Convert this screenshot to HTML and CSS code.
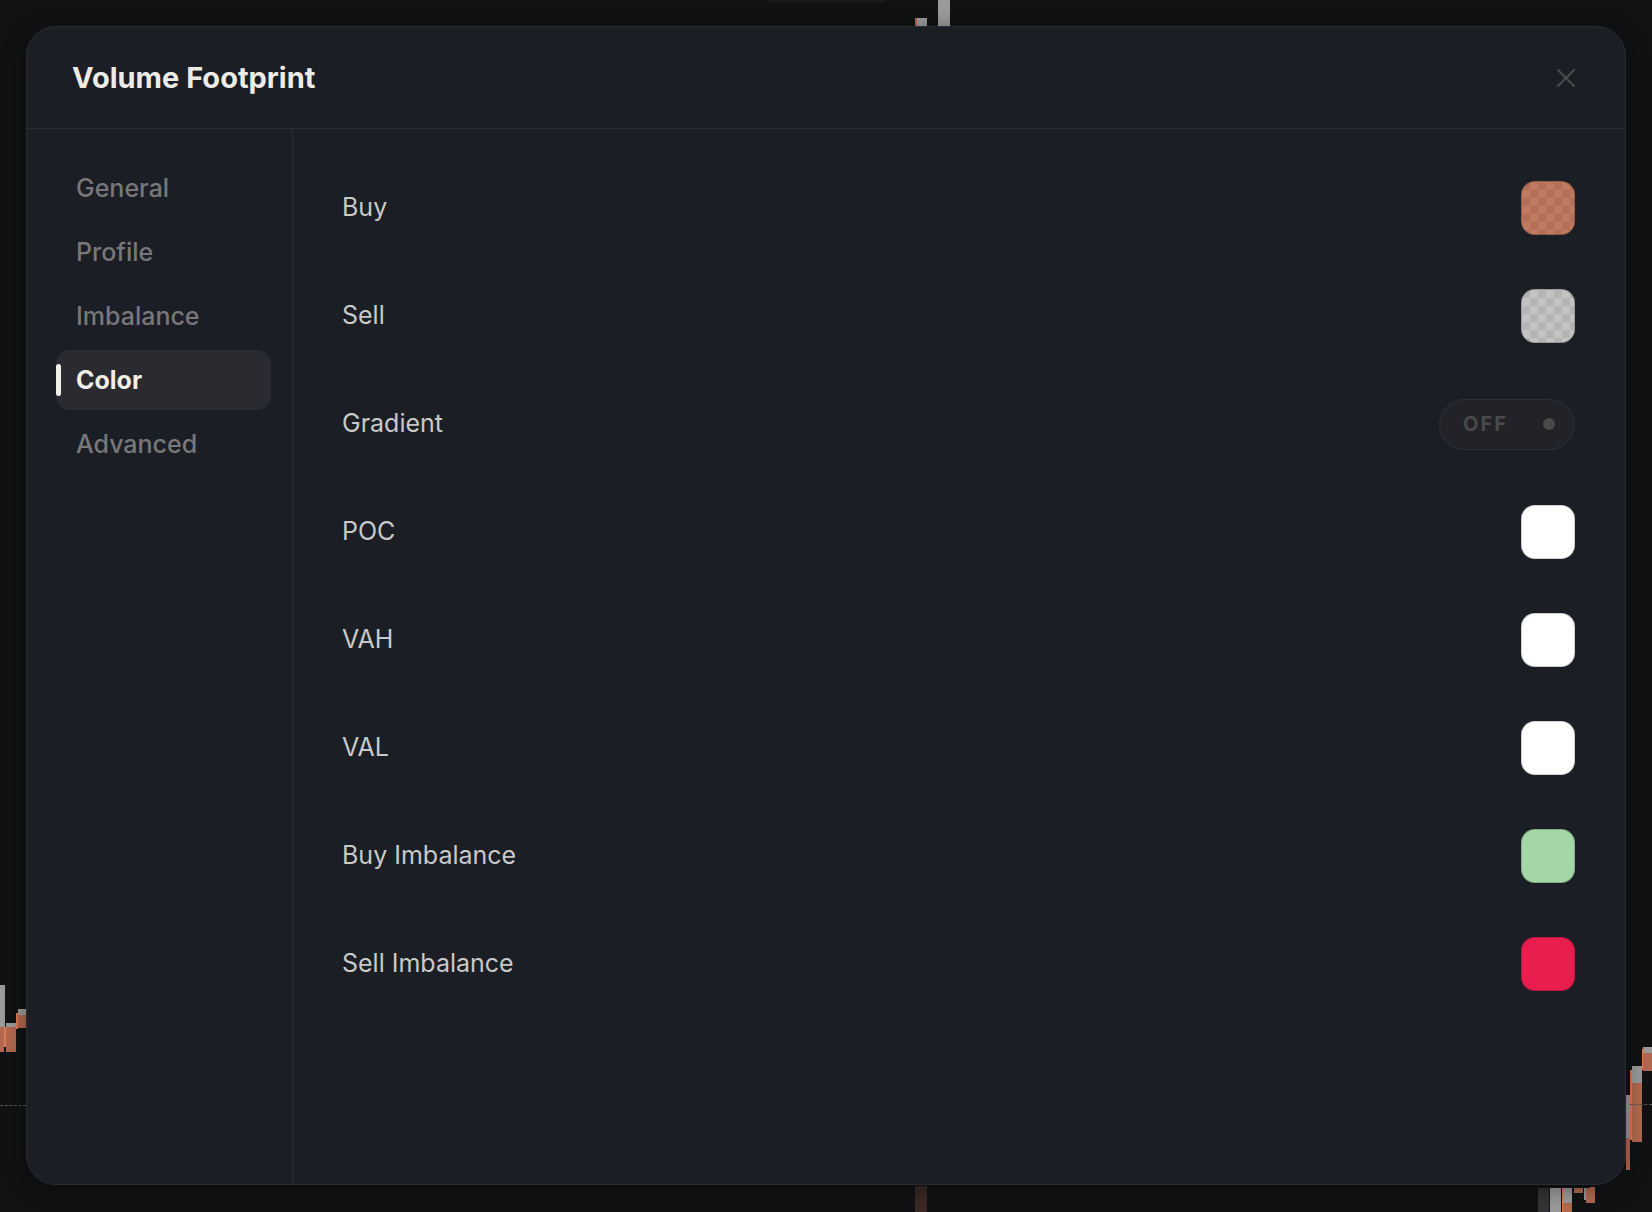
FILE: index.html
```html
<!DOCTYPE html>
<html lang="en">
<head>
    <meta charset="UTF-8">
    <meta name="viewport" content="width=device-width, initial-scale=1.0">
    <title>Volume Footprint</title>
    <link rel="stylesheet" href="styles.css">
</head>
<body>
    <!-- chart candles peeking out behind the dialog -->
    <div class="chart">
        <span class="pill" style="left:767px;top:-10px;width:121px;height:13px"></span>
        <span class="bar down" style="left:915px;top:18px;width:2px;height:8px"></span>
        <span class="bar up" style="left:917px;top:18px;width:10px;height:8px"></span>
        <span class="bar up" style="left:938px;top:0;width:12px;height:26px"></span>

        <span class="bar up" style="left:0;top:985px;width:5px;height:42px"></span>
        <span class="bar down" style="left:0;top:1027px;width:4px;height:25px"></span>
        <span class="wick" style="left:4px;top:1027px;height:20px"></span>
        <span class="bar up" style="left:6px;top:1023px;width:10px;height:4px"></span>
        <span class="bar down" style="left:6px;top:1027px;width:10px;height:25px"></span>
        <span class="wick" style="left:16px;top:1013px;height:16px"></span>
        <span class="bar up" style="left:18px;top:1009px;width:9px;height:6px"></span>
        <span class="bar down" style="left:18px;top:1015px;width:9px;height:13px"></span>
        <span class="dash" style="left:0;top:1105px;width:26px"></span>

        <span class="bar up" style="left:1626px;top:1095px;width:4px;height:43px"></span>
        <span class="bar down" style="left:1626px;top:1138px;width:4px;height:32px"></span>
        <span class="wick" style="left:1630px;top:1070px;height:70px"></span>
        <span class="bar up" style="left:1632px;top:1066px;width:10px;height:17px"></span>
        <span class="bar down" style="left:1632px;top:1083px;width:10px;height:59px"></span>
        <span class="wick" style="left:1642px;top:1049px;height:21px"></span>
        <span class="bar up" style="left:1643px;top:1047px;width:9px;height:6px"></span>
        <span class="bar down" style="left:1643px;top:1053px;width:9px;height:18px"></span>
        <span class="dash" style="left:1630px;top:1104px;width:22px"></span>

        <span class="bar shade" style="left:915px;top:1186px;width:12px;height:26px"></span>
        <span class="bar down" style="left:1590px;top:1187px;width:5px;height:16px"></span>
        <span class="bar dim" style="left:1538px;top:1188px;width:11px;height:24px"></span>
        <span class="bar up" style="left:1550px;top:1188px;width:11px;height:24px"></span>
        <span class="wick" style="left:1562px;top:1188px;height:24px"></span>
        <span class="bar up" style="left:1563px;top:1188px;width:9px;height:15px"></span>
        <span class="bar down" style="left:1563px;top:1203px;width:9px;height:9px"></span>
        <span class="bar down" style="left:1574px;top:1188px;width:9px;height:5px"></span>
        <span class="bar up" style="left:1584px;top:1188px;width:2px;height:12px"></span>
        <span class="bar down" style="left:1586px;top:1188px;width:9px;height:15px"></span>
    </div>

    <div class="modal">
        <div class="modal-header">
            <h2>Volume Footprint</h2>
            <button class="close" aria-label="Close">
                <svg width="18" height="18" viewBox="0 0 18 18">
                    <path d="M1 1L17 17M17 1L1 17" stroke="currentColor" stroke-width="2" stroke-linecap="round"/>
                </svg>
            </button>
        </div>

        <div class="modal-body">
            <nav class="sidebar">
                <a class="nav-item">General</a>
                <a class="nav-item">Profile</a>
                <a class="nav-item">Imbalance</a>
                <a class="nav-item active">Color</a>
                <a class="nav-item">Advanced</a>
            </nav>

            <div class="settings">
                <div class="row">
                    <span class="label">Buy</span>
                    <span class="swatch swatch-buy"></span>
                </div>
                <div class="row">
                    <span class="label">Sell</span>
                    <span class="swatch swatch-sell"></span>
                </div>
                <div class="row">
                    <span class="label">Gradient</span>
                    <span class="toggle">
                        <span class="toggle-text">OFF</span>
                        <span class="toggle-dot"></span>
                    </span>
                </div>
                <div class="row">
                    <span class="label">POC</span>
                    <span class="swatch swatch-white"></span>
                </div>
                <div class="row">
                    <span class="label">VAH</span>
                    <span class="swatch swatch-white"></span>
                </div>
                <div class="row">
                    <span class="label">VAL</span>
                    <span class="swatch swatch-white"></span>
                </div>
                <div class="row">
                    <span class="label">Buy Imbalance</span>
                    <span class="swatch swatch-green"></span>
                </div>
                <div class="row">
                    <span class="label">Sell Imbalance</span>
                    <span class="swatch swatch-red"></span>
                </div>
            </div>
        </div>
    </div>
</body>
</html>
```

FILE: styles.css
```css
body {
    margin: 0;
    padding: 0;
    height: 1212px;
    overflow: hidden;
    background: #111214;
    font-family: Inter, "Noto Sans", sans-serif;
    position: relative;
}

/* background chart */
.chart {
    position: absolute;
    inset: 0;
}

.chart span {
    position: absolute;
    display: block;
}

.bar.up { background: #9b9b9b; }
.bar.down { background: #b3694f; }
.bar.dim { background: #333436; }
.bar.shade { background: #3b2925; }

.wick {
    width: 2px;
    background: #e07a55;
}

.dash {
    height: 0;
    border-top: 1px dashed #55565a;
}

.pill {
    background: #19191b;
    border-radius: 8px;
}

/* dialog */
.modal {
    position: relative;
    box-sizing: border-box;
    width: 1600px;
    height: 1159px;
    margin: 26px auto 0;
    background: #1b1e24;
    border: 1px solid #2b2c30;
    border-radius: 30px;
    display: flex;
    flex-direction: column;
    overflow: hidden;
    box-shadow: 0 4px 24px rgba(0, 0, 0, 0.4);
}

.modal-header {
    height: 101px;
    flex-shrink: 0;
    display: flex;
    align-items: center;
    justify-content: space-between;
    padding: 0 50px 0 45px;
    border-bottom: 1px solid #2a2d33;
}

.modal-header h2 {
    margin: 0;
    font-size: 29px;
    font-weight: 700;
    color: #ecebe7;
}

.close {
    background: none;
    border: none;
    padding: 0;
    width: 18px;
    height: 18px;
    color: #4b4b4c;
    cursor: pointer;
}

.modal-body {
    flex: 1;
    display: flex;
}

.sidebar {
    width: 266px;
    flex-shrink: 0;
    box-sizing: border-box;
    border-right: 1px solid #2a2d33;
    padding: 29px 21px 0 29px;
    display: flex;
    flex-direction: column;
    gap: 4px;
}

.nav-item {
    position: relative;
    height: 60px;
    display: flex;
    align-items: center;
    padding-left: 20px;
    border-radius: 14px;
    font-size: 25px;
    font-weight: 500;
    color: #78777a;
    cursor: pointer;
}

.nav-item.active {
    background: #2a2b30;
    color: #f1efea;
    font-weight: 700;
}

.nav-item.active::before {
    content: "";
    position: absolute;
    left: 0;
    top: 14px;
    width: 5px;
    height: 32px;
    border-radius: 3px;
    background: #f1efea;
}

.settings {
    flex: 1;
    padding: 52px 50px 0 49px;
    display: flex;
    flex-direction: column;
    gap: 54px;
}

.row {
    height: 54px;
    display: flex;
    align-items: center;
    justify-content: space-between;
}

.label {
    font-size: 25px;
    color: #c9c9c9;
    padding-bottom: 3px;
}

.swatch {
    box-sizing: border-box;
    width: 54px;
    height: 54px;
    border-radius: 14px;
    border: 1px solid rgba(0, 0, 0, 0.18);
}

.swatch-buy {
    background: repeating-conic-gradient(#c07a5f 0 25%, #b46f58 0 50%) 0 0 / 16px 16px;
}

.swatch-sell {
    background: repeating-conic-gradient(#c3c3c3 0 25%, #b4b4b4 0 50%) 0 0 / 16px 16px;
}

.swatch-white { background: #ffffff; }
.swatch-green { background: #a5d6a7; }
.swatch-red { background: #e91e4e; }

.toggle {
    box-sizing: border-box;
    width: 136px;
    height: 51px;
    border-radius: 26px;
    background: #212329;
    border: 1px solid #2f3137;
    display: flex;
    align-items: center;
    justify-content: space-between;
    padding: 0 19px 0 23px;
}

.toggle-text {
    font-size: 20px;
    font-weight: 700;
    letter-spacing: 2px;
    color: #4a4a4b;
}

.toggle-dot {
    width: 12px;
    height: 12px;
    border-radius: 50%;
    background: #4a4a4b;
}
```
